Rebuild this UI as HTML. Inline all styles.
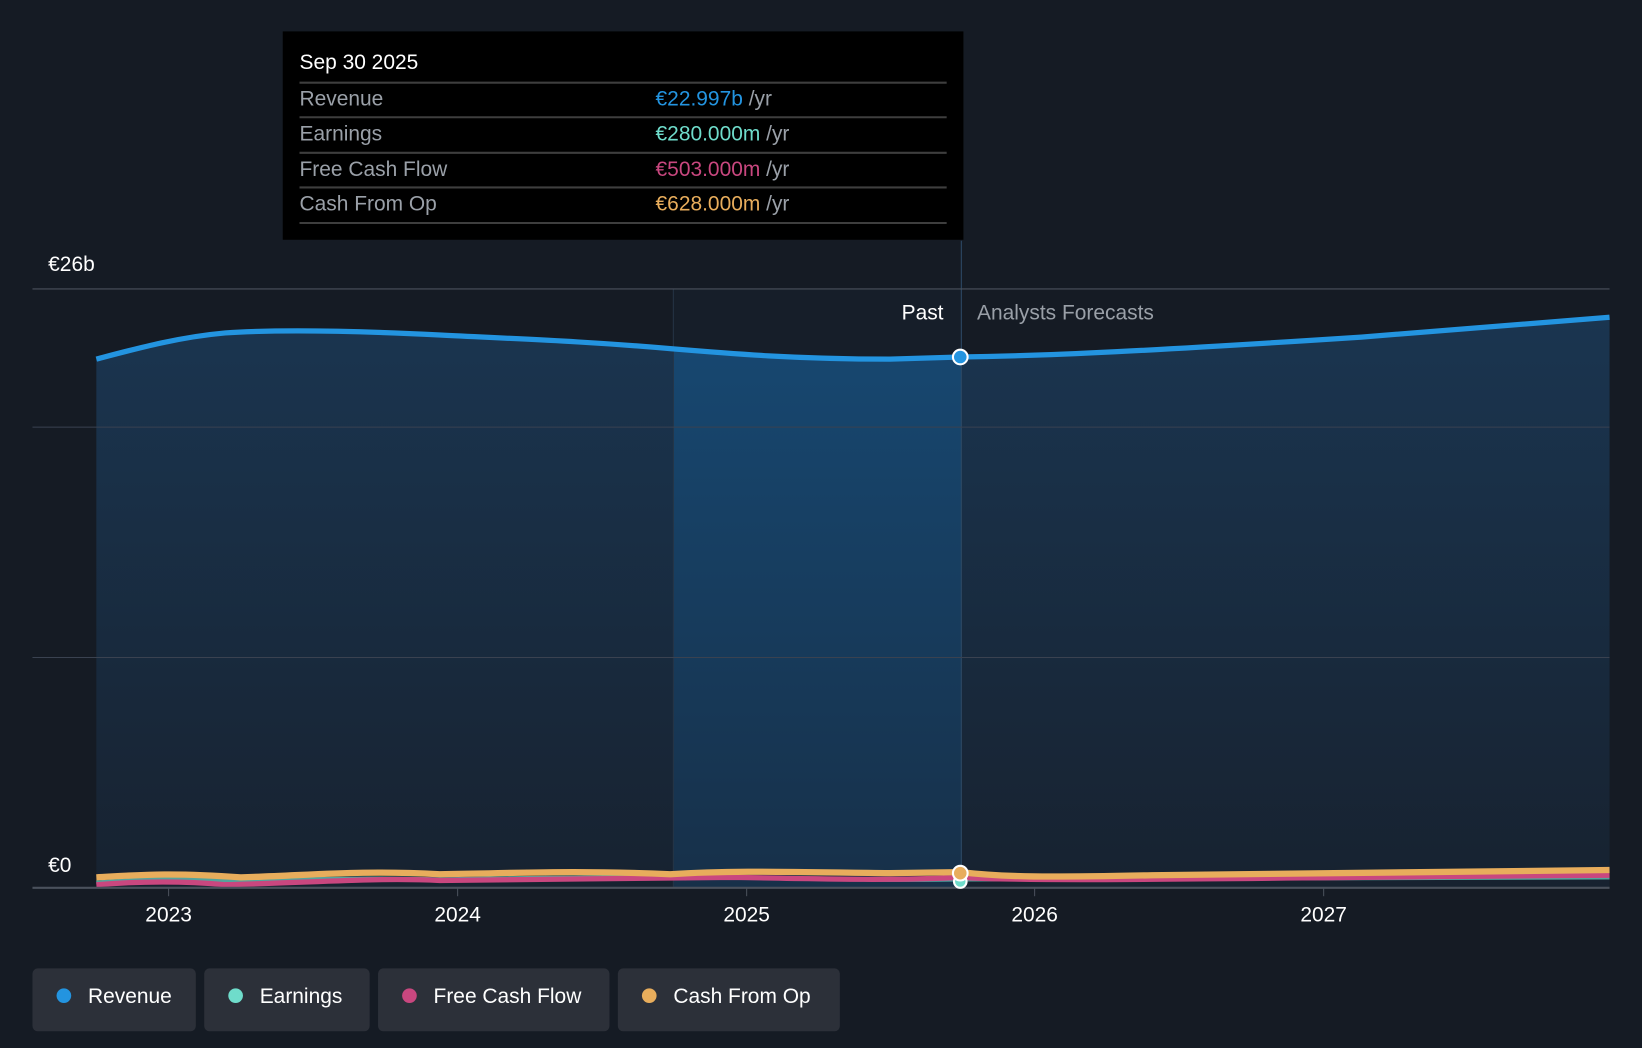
<!DOCTYPE html><html><head><style>html,body{margin:0;padding:0;background:#151b24;overflow:hidden}svg{display:block}</style></head><body>
<svg width="1642" height="1048" viewBox="0 0 1568 1001" preserveAspectRatio="none" font-family="Liberation Sans, sans-serif">
<defs>
<linearGradient id="g" x1="0" y1="0" x2="0" y2="1"><stop offset="0" stop-color="#1a3550"/><stop offset="1" stop-color="#172230"/></linearGradient>
<linearGradient id="h" x1="0" y1="0" x2="0" y2="1"><stop offset="0" stop-color="#174770"/><stop offset="1" stop-color="#173049"/></linearGradient>
</defs>
<rect width="1568" height="1001" fill="#151b24"/>
<rect x="643" y="276" width="275" height="572" fill="#161e29"/>
<path d="M92 343 C130 333 170 322 215 318 C260 315 320 315 420 320 C500 324 560 326 640 333 C700 338 760 343 850 343 L917 341 C1000 340 1100 335 1300 322 L1537 303 L1537 848 L92 848Z" fill="url(#g)"/>
<path d="M643 333 C700 338 760 343 850 343 L918 341 L918 848 L643 848Z" fill="url(#h)"/>
<line x1="643" y1="276" x2="643" y2="848" stroke="#253445"/>
<line x1="918" y1="230" x2="918" y2="848" stroke="#2d4a66"/>
<g stroke="#3a4250" stroke-width="1"><line x1="31" y1="276" x2="1537" y2="276" stroke="#4a515c"/><line x1="31" y1="408" x2="1537" y2="408"/><line x1="31" y1="628" x2="1537" y2="628"/></g>
<path d="M92 343 C130 333 170 322 215 318 C260 315 320 315 420 320 C500 324 560 326 640 333 C700 338 760 343 850 343 L917 341 C1000 340 1100 335 1300 322 L1537 303" fill="none" stroke="#2394e0" stroke-width="5"/>
<path d="M92 843 C130 840 170 838 215 841 C300 840 360 838 420 840 C520 838 600 838 700 838 C800 840 860 841 917 840 C1000 841 1200 839 1537 838" fill="none" stroke="#6fdccb" stroke-width="4" opacity=".7"/>
<path d="M92 845 C130 842 170 841 215 845 C300 843 360 838 420 841 C520 840 600 839 700 838 C800 840 860 841 917 838 C1000 843 1200 838 1537 836" fill="none" stroke="#c9477f" stroke-width="5"/>
<path d="M92 838 C130 836 160 833 230 838 C300 836 340 831 420 835 C500 834 540 831 640 835 C700 831 760 833 850 834 L917 833 C960 838 1000 838 1100 836 C1250 833 1400 832 1537 831" fill="none" stroke="#e8ad5c" stroke-width="6"/>
<line x1="31" y1="848" x2="1537" y2="848" stroke="#4a515c" stroke-width="2"/>
<g stroke="#4a515c"><line x1="161" y1="848" x2="161" y2="856"/><line x1="437" y1="848" x2="437" y2="856"/><line x1="713" y1="848" x2="713" y2="856"/><line x1="988" y1="848" x2="988" y2="856"/><line x1="1264" y1="848" x2="1264" y2="856"/></g>
<circle cx="917" cy="341" r="7" fill="#2394e0" stroke="#fff" stroke-width="2"/>
<circle cx="917" cy="842" r="6" fill="#6fdccb" stroke="#fff" stroke-width="2"/>
<circle cx="917" cy="834" r="7" fill="#e8ad5c" stroke="#fff" stroke-width="2"/>
<g fill="#fff" font-size="20"><text x="46" y="259">€26b</text><text x="46" y="833">€0</text>
<text x="161" y="880" text-anchor="middle">2023</text><text x="437" y="880" text-anchor="middle">2024</text><text x="713" y="880" text-anchor="middle">2025</text><text x="988" y="880" text-anchor="middle">2026</text><text x="1264" y="880" text-anchor="middle">2027</text>
<text x="901" y="305" text-anchor="end">Past</text></g>
<text x="933" y="305" fill="#9aa0a8" font-size="20">Analysts Forecasts</text>
<rect x="270" y="30" width="650" height="199" fill="#000"/>
<text x="286" y="66" fill="#fff" font-size="20">Sep 30 2025</text>
<g stroke="#3e3e3e" stroke-width="2"><line x1="286" y1="79" x2="904" y2="79"/><line x1="286" y1="112" x2="904" y2="112"/><line x1="286" y1="146" x2="904" y2="146"/><line x1="286" y1="179" x2="904" y2="179"/><line x1="286" y1="213" x2="904" y2="213"/></g>
<g font-size="20" fill="#9aa0a8"><text x="286" y="101">Revenue</text><text x="286" y="134">Earnings</text><text x="286" y="168">Free Cash Flow</text><text x="286" y="201">Cash From Op</text></g>
<g font-size="20"><text x="626" y="101"><tspan fill="#2394e0">€22.997b</tspan><tspan fill="#9aa0a8"> /yr</tspan></text>
<text x="626" y="134"><tspan fill="#6fdccb">€280.000m</tspan><tspan fill="#9aa0a8"> /yr</tspan></text>
<text x="626" y="168"><tspan fill="#c9477f">€503.000m</tspan><tspan fill="#9aa0a8"> /yr</tspan></text>
<text x="626" y="201"><tspan fill="#e8ad5c">€628.000m</tspan><tspan fill="#9aa0a8"> /yr</tspan></text></g>
<g fill="#2c3039"><rect x="31" y="925" width="156" height="60" rx="5"/><rect x="195" y="925" width="158" height="60" rx="5"/><rect x="361" y="925" width="221" height="60" rx="5"/><rect x="590" y="925" width="212" height="60" rx="5"/></g>
<circle cx="61" cy="951" r="7" fill="#2394e0"/><circle cx="225" cy="951" r="7" fill="#6fdccb"/><circle cx="391" cy="951" r="7" fill="#c9477f"/><circle cx="620" cy="951" r="7" fill="#e8ad5c"/>
<g fill="#fff" font-size="20"><text x="84" y="958">Revenue</text><text x="248" y="958">Earnings</text><text x="414" y="958">Free Cash Flow</text><text x="643" y="958">Cash From Op</text></g>
</svg></body></html>
